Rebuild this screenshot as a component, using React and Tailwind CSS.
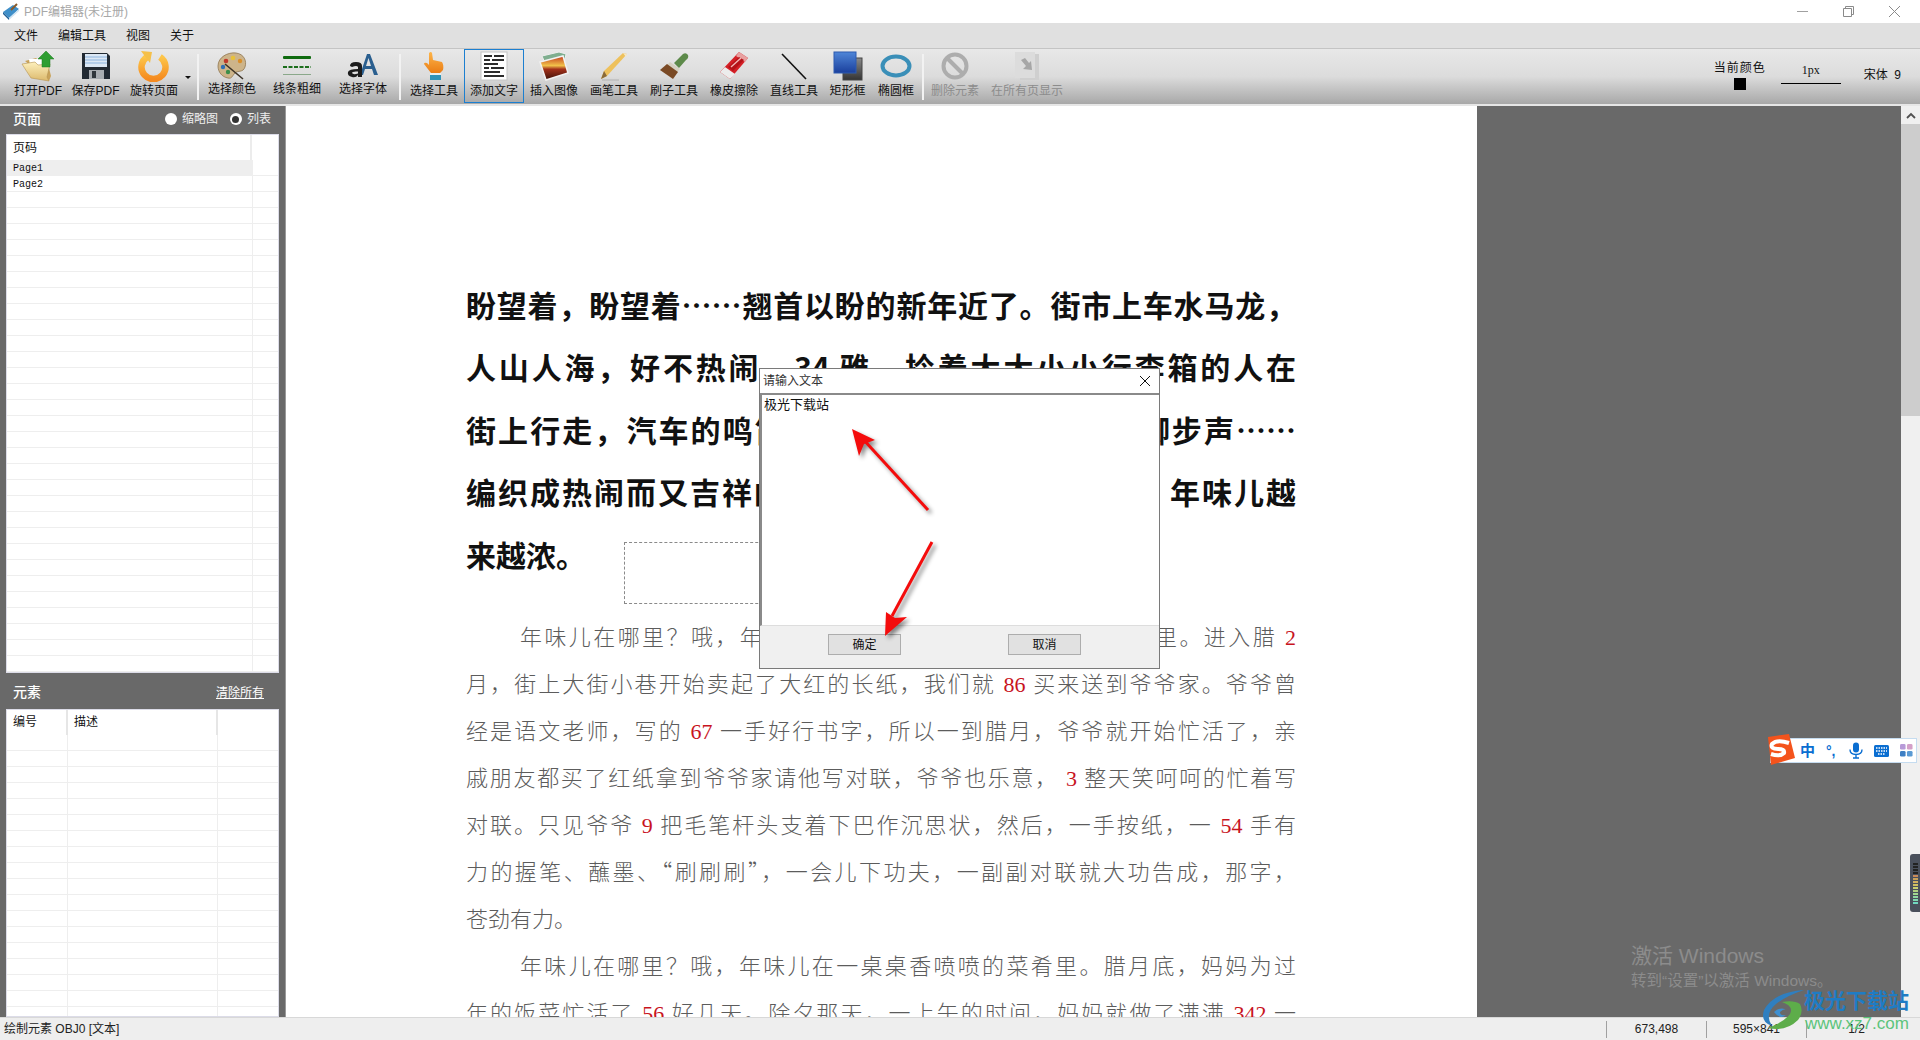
import React from 'react';

const AppIcon = () => (
  <svg width="18" height="18" viewBox="0 0 18 18">
    <path d="M1 9 L11 2 L17 6 L7 15 Z" fill="#3f8fc9" />
    <path d="M1 9 L7 15 L7 17 L1 11 Z" fill="#1f5f96" />
    <path d="M7 15 L17 6 L17 8 L7 17 Z" fill="#cfe3f2" />
    <path d="M9 7 L15 1" stroke="#8a5a2a" strokeWidth="2" />
  </svg>
);

const FolderIcon = () => (
  <svg width="34" height="32" viewBox="0 0 34 32">
    <defs>
      <linearGradient id="folderA" x1="0" y1="0" x2="0" y2="1">
        <stop offset="0" stopColor="#fdf0bd" />
        <stop offset="1" stopColor="#dcb96c" />
      </linearGradient>
    </defs>
    <path d="M4 11 L15 8 L18 11 L26 10 L30 26 L28 31 Z" fill="#c9a35a" />
    <path d="M8 9 H24 V22 H10 Z" fill="#fff" />
    <path d="M1 14 L14 12 L17 15 L29 14 L26 27 L28 31 L10 28 Q6 22 1 14 Z" fill="url(#folderA)" stroke="#b5924f" strokeWidth="0.6" />
    <path d="M17 9 L25 1 L33 9 H29 V17 H21 V9 Z" fill="#2f9e32" stroke="#1f7a22" strokeWidth="0.5" />
  </svg>
);

const SaveIcon = () => (
  <svg width="30" height="28" viewBox="0 0 30 28">
    <path d="M1 1 H26 L29 4 V27 H1 Z" fill="#222a33" />
    <rect x="4" y="2" width="22" height="13" fill="#dce8f5" />
    <path d="M4 5 H26 M4 8 H26 M4 11 H26" stroke="#8db4de" strokeWidth="1" />
    <rect x="8" y="18" width="15" height="9" fill="#a9adb2" />
    <rect x="11" y="19" width="4" height="7" fill="#30363c" />
  </svg>
);

const RotateIcon = () => (
  <svg width="32" height="32" viewBox="0 0 32 32">
    <defs>
      <linearGradient id="rotA" x1="0" y1="0" x2="0" y2="1">
        <stop offset="0" stopColor="#fdc64a" />
        <stop offset="1" stopColor="#f58a1f" />
      </linearGradient>
    </defs>
    <path d="M22 7 A12 12 0 1 1 9 7" fill="none" stroke="url(#rotA)" strokeWidth="6.5" />
    <path d="M3 1 L14 2 L12 13 Z" fill="#f5c04a" />
  </svg>
);

const PaletteIcon = () => (
  <svg width="32" height="30" viewBox="0 0 32 30">
    <path d="M2 15 C2 6 12 1 20 2 C28 3 31 10 29 16 C27 22 22 19 19 22 C16 25 16 28 12 27 C6 26 2 21 2 15 Z" fill="#cdb48a" stroke="#8f7650" strokeWidth="0.8" />
    <circle cx="10" cy="10" r="2.3" fill="#c0392b" />
    <circle cx="17" cy="7" r="2.3" fill="#e8c13a" />
    <circle cx="24" cy="10" r="2.2" fill="#d98f2b" />
    <circle cx="7" cy="16" r="2.2" fill="#2f6fb5" />
    <circle cx="12" cy="21" r="2.2" fill="#3b8f4a" />
    <path d="M9 13 L27 28" stroke="#3d3328" strokeWidth="1.6" />
  </svg>
);

const LinesIcon = () => (
  <svg width="30" height="22" viewBox="0 0 30 22">
    <rect x="1" y="1" width="28" height="3" rx="1" fill="#0f6b0f" />
    <path d="M1 12 H29" stroke="#1c6e1c" strokeWidth="2" strokeDasharray="4 1.5" />
    <rect x="1" y="19" width="28" height="1" fill="#8aa88a" />
  </svg>
);

const FontIcon = () => (
  <svg width="32" height="28" viewBox="0 0 32 28">
    <path d="M13 23 L20 2 H23 L31 23 H27 L25 17 H18 L16 23 Z M19 14 H24 L21.5 6 Z" fill="#2a5f8f" fillRule="evenodd" />
    <path d="M3 14 Q3 10 9 10 Q15 10 15 14 V25 H11 V23 Q9 26 5 25 Q0 24 1 20 Q2 17 11 17 V15 Q10 13 5 15 Z M11 19.5 Q5 19 5 21 Q6 23 11 21.5 Z" fill="#1c1c1c" fillRule="evenodd" />
  </svg>
);

const HandIcon = () => (
  <svg width="22" height="30" viewBox="0 0 22 30">
    <defs>
      <linearGradient id="handA" x1="0" y1="0" x2="0" y2="1">
        <stop offset="0" stopColor="#fdb54a" />
        <stop offset="1" stopColor="#ea7d14" />
      </linearGradient>
    </defs>
    <path d="M6 2 Q8 0 9 2 L10 9 L19 11 Q21 14 20 19 L17 22 H8 L1 13 Q1 11 4 12 L6 14 Z" fill="url(#handA)" />
    <rect x="7" y="22" width="11" height="7" fill="#2f93b8" />
    <rect x="7" y="22" width="11" height="2" fill="#e8f0f2" />
  </svg>
);

const DocIcon = () => (
  <svg width="28" height="30" viewBox="0 0 28 30">
    <rect x="1" y="1" width="26" height="28" fill="#fdfdfd" stroke="#c4c4c4" />
    <path d="M4 5 H12 M14 5 H24 M4 9 H10 M12 9 H24 M4 13 H18 M4 17 H9 M11 17 H24 M4 21 H20 M4 25 H24" stroke="#2a2a2a" strokeWidth="1.8" />
  </svg>
);

const ImageIcon = () => (
  <svg width="30" height="30" viewBox="0 0 30 30">
    <defs>
      <linearGradient id="imgA" x1="0" y1="0" x2="0" y2="1">
        <stop offset="0" stopColor="#c23a1c" />
        <stop offset="0.4" stopColor="#f2c24a" />
        <stop offset="0.55" stopColor="#a3301a" />
        <stop offset="1" stopColor="#3d1208" />
      </linearGradient>
    </defs>
    <path d="M3 5 L20 1 L27 3 L26 8 L6 12 Z" fill="#7fae8f" stroke="#eee" />
    <path d="M1 11 L24 5 L29 22 L7 29 Z" fill="url(#imgA)" stroke="#f2f2f2" strokeWidth="1.5" />
  </svg>
);

const PencilIcon = () => (
  <svg width="30" height="30" viewBox="0 0 30 30">
    <path d="M2 28 L5 20 L24 2 L28 3 L8 25 Z" fill="#eec15c" />
    <path d="M2 28 L5 20 L8 25 Z" fill="#8a6a3a" />
    <path d="M24 2 L28 3 L27 6 Z" fill="#f5e7c4" />
    <path d="M3 29 H20" stroke="#8c8c8c" strokeWidth="0.8" opacity="0.6" />
  </svg>
);

const BrushIcon = () => (
  <svg width="30" height="28" viewBox="0 0 30 28">
    <path d="M15 11 L24 2 Q27 0 29 3 Q30 6 27 8 L20 16 Z" fill="#5d8a4a" />
    <path d="M11 10 L21 17 L18 20 L8 13 Z" fill="#d5d0c0" />
    <path d="M8 12 L19 20 L14 27 L1 18 Z" fill="#7a4a25" />
  </svg>
);

const EraserIcon = () => (
  <svg width="30" height="28" viewBox="0 0 30 28">
    <path d="M1 20 L20 0 L29 6 L11 27 Z" fill="#d41f26" />
    <path d="M1 20 L6 15 L16 22 L11 27 Z" fill="#ececec" />
    <path d="M20 0 L29 6 L26 10 L17 4 Z" fill="#e8a0a0" />
    <path d="M9 15 L20 5 L25 8 L14 19 Z" fill="#b51218" />
    <path d="M12 15 L22 6" stroke="#f4b6b6" strokeWidth="1.4" />
  </svg>
);

const LineIcon = () => (
  <svg width="26" height="27" viewBox="0 0 26 27">
    <path d="M1 1 L25 26" stroke="#111" strokeWidth="1.6" />
  </svg>
);

const RectIcon = () => (
  <svg width="30" height="30" viewBox="0 0 30 30">
    <defs>
      <linearGradient id="rectA" x1="0" y1="0" x2="0" y2="1">
        <stop offset="0" stopColor="#4f86d8" />
        <stop offset="1" stopColor="#1a3f9c" />
      </linearGradient>
      <linearGradient id="rectB" x1="0" y1="0" x2="0" y2="1">
        <stop offset="0" stopColor="#8a8a8a" />
        <stop offset="1" stopColor="#333" />
      </linearGradient>
    </defs>
    <rect x="10" y="7" width="19" height="22" fill="url(#rectB)" stroke="#444" />
    <rect x="1" y="1" width="22" height="21" fill="url(#rectA)" stroke="#2d5bb0" />
  </svg>
);

const EllipseIcon = () => (
  <svg width="32" height="24" viewBox="0 0 32 24">
    <ellipse cx="16" cy="12" rx="13.5" ry="9.5" fill="none" stroke="#3a8fb8" strokeWidth="4" />
  </svg>
);

const NoIcon = () => (
  <svg width="28" height="28" viewBox="0 0 28 28">
    <circle cx="14" cy="14" r="11.5" fill="none" stroke="#adadad" strokeWidth="4" />
    <path d="M6 6 L22 22" stroke="#adadad" strokeWidth="4" />
  </svg>
);

const GhostPageIcon = () => (
  <svg width="26" height="30" viewBox="0 0 26 30">
    <rect x="6" y="3" width="19" height="26" fill="#cfcfcf" />
    <rect x="1" y="1" width="20" height="26" fill="#dcdcdc" />
    <path d="M7 9 L11 7 L15 12 L17 10 L18 19 L9 18 L12 15 Z" fill="#a6a6a6" />
  </svg>
);

const toolsLeft = [
  { label: '打开PDF', icon: <FolderIcon />, w: 'w-[56px]' },
  { label: '保存PDF', icon: <SaveIcon />, w: 'w-[59px]' },
  { label: '旋转页面', icon: <RotateIcon />, w: 'w-[58px]' },
];

const toolsStyle = [
  { label: '选择颜色', icon: <PaletteIcon />, w: 'w-[64px]' },
  { label: '线条粗细', icon: <LinesIcon />, w: 'w-[66px]' },
  { label: '选择字体', icon: <FontIcon />, w: 'w-[66px]' },
];

const toolsDraw = [
  { label: '选择工具', icon: <HandIcon />, w: 'w-[60px]' },
  { label: '添加文字', icon: <DocIcon />, w: 'w-[60px]', active: true },
  { label: '插入图像', icon: <ImageIcon />, w: 'w-[60px]' },
  { label: '画笔工具', icon: <PencilIcon />, w: 'w-[60px]' },
  { label: '刷子工具', icon: <BrushIcon />, w: 'w-[60px]' },
  { label: '橡皮擦除', icon: <EraserIcon />, w: 'w-[60px]' },
  { label: '直线工具', icon: <LineIcon />, w: 'w-[60px]' },
  { label: '矩形框', icon: <RectIcon />, w: 'w-[47px]' },
  { label: '椭圆框', icon: <EllipseIcon />, w: 'w-[50px]' },
];

const toolsOff = [
  { label: '删除元素', icon: <NoIcon />, w: 'w-[60px]', off: true },
  { label: '在所有页显示', icon: <GhostPageIcon />, w: 'w-[84px]', off: true },
];

const ToolButton = ({ label, icon, w, active, off, short }) => (
  <div className={`${w} h-[54px] flex flex-col items-center shrink-0 ${active ? 'border border-[#1c7fd0]' : 'border border-transparent'}`}>
    <div className="h-[32px] flex items-center justify-center">{icon}</div>
    <span className={`text-[12px] leading-[14px] whitespace-nowrap ${short ? 'mt-[0px]' : 'mt-[2px]'} ${off ? 'text-[#8c8c8c]' : 'text-[#111]'}`}>
      {label}
    </span>
  </div>
);

const Sep = ({ className }) => <div className={`w-[2px] h-[46px] self-center bg-[#f2f2f2] shrink-0 ${className}`} />;

const Radio = ({ checked }) => (
  <span className="w-[12px] h-[12px] rounded-full bg-white flex items-center justify-center shrink-0">
    {checked && <span className="w-[7px] h-[7px] rounded-full bg-[#333]" />}
  </span>
);

const pageRows = ['Page1', 'Page2', ...Array(30).fill('')];
const elementRows = Array(18).fill(0);

const headLines = [
  '盼望着，盼望着……翘首以盼的新年近了。街市上车水马龙，',
  '人山人海，好不热闹。34 雅，拎着大大小小行李箱的人在',
  '街上行走，汽车的鸣笛声、人们说笑声、匆匆的脚步声……',
  '编织成热闹而又吉祥的新春交响曲。大街小巷里　年味儿越',
];

const Num = ({ children }) => <span className="text-[#c8141e] leading-none font-['Liberation_Serif',serif]"> {children} </span>;

const Line = ({ children, indent }) => (
  <div className={`[text-align-last:justify] ${indent ? 'pl-[54px]' : ''}`}>{children}</div>
);

const App = () => {
  return (
    <div className="relative w-full h-[1040px] overflow-hidden flex flex-col bg-white font-['Liberation_Sans','Noto_Sans_CJK_SC',sans-serif]">
      {/* title bar */}
      <div className="h-[23px] flex items-center shrink-0 bg-white">
        <div className="pl-[2px] pr-[4px]"><AppIcon /></div>
        <span className="text-[12px] text-[#a8a8a8]">PDF编辑器(未注册)</span>
        <div className="ml-auto flex items-center text-[#8a8a8a]">
          <svg width="11" height="11" viewBox="0 0 11 11" className="mr-[35px]"><path d="M0 5.5 H11" stroke="#a0a0a0" /></svg>
          <svg width="11" height="11" viewBox="0 0 11 11" className="mr-[35px]"><path d="M0.5 2.5 H8.5 V10.5 H0.5 Z M2.5 2.5 V0.5 H10.5 V8.5 H8.5" fill="none" stroke="#8a8a8a" /></svg>
          <svg width="11" height="11" viewBox="0 0 11 11" className="mr-[20px]"><path d="M0 0 L11 11 M11 0 L0 11" stroke="#8a8a8a" /></svg>
        </div>
      </div>

      {/* menu */}
      <div className="h-[25px] flex items-center gap-[20px] pl-[14px] bg-[#e0e0e0] text-[12px] text-[#111] shrink-0">
        <span>文件</span>
        <span>编辑工具</span>
        <span>视图</span>
        <span>关于</span>
      </div>

      {/* toolbar */}
      <div className="h-[56px] flex items-start pl-[10px] shrink-0 border-t border-[#c4c4c4] bg-linear-to-b from-[#e8e8e8] via-[#dcdcdc] to-[#a8a8a8]">
        {toolsLeft.map((t) => <ToolButton key={t.label} {...t} />)}
        <svg width="10" height="6" viewBox="0 0 10 6" className="mt-[26px] mr-[1px] shrink-0"><path d="M2 1 H8 L5 4 Z" fill="#111" /></svg>
        <Sep className="ml-[3px] mr-[1px]" />
        {toolsStyle.map((t) => <ToolButton key={t.label} short {...t} />)}
        <Sep className="ml-[3px] mr-[3px]" />
        {toolsDraw.map((t) => <ToolButton key={t.label} {...t} />)}
        <Sep className="mx-[1px]" />
        {toolsOff.map((t) => <ToolButton key={t.label} {...t} />)}
        <div className="ml-auto flex items-start text-[12px] text-[#111] self-stretch">
          <div className="flex flex-col items-center mt-[12px] w-[52px]">
            <span className="leading-[15px] tracking-[1px] whitespace-nowrap">当前颜色</span>
            <span className="w-[12px] h-[12px] mt-[2px] bg-black" />
          </div>
          <div className="ml-[15px] mt-[13px] w-[60px] h-[22px] border-b border-black text-center text-[12px] font-['Liberation_Serif',serif] leading-[16px]">1px</div>
          <div className="ml-[23px] mr-[19px] mt-[18px] leading-[16px] whitespace-pre">宋体  9</div>
        </div>
      </div>

      {/* main */}
      <div className="flex-1 min-h-0 flex bg-[#696969] border-t-2 border-[#e6e6e6]">
        {/* left panel */}
        <div className="w-[286px] shrink-0 flex flex-col pl-[6px] pr-[6px] border-r border-[#9a9a9a]">
          <div className="h-[28px] flex items-center text-white shrink-0 pb-[2px]">
            <span className="pl-[7px] text-[14px] font-medium">页面</span>
            <div className="ml-auto flex items-center text-[12px] text-[#eeeeee] pr-[8px]">
              <Radio />
              <span className="ml-[5px] mr-[12px]">缩略图</span>
              <Radio checked />
              <span className="ml-[5px]">列表</span>
            </div>
          </div>
          <div className="h-[539px] shrink-0 bg-white border border-[#dcdce8] overflow-hidden">
            <div className="h-[25px] flex text-[12px] text-[#111]">
              <div className="w-[245px] pl-[6px] pt-[4px] border-r-2 border-[#ececec]">页码</div>
            </div>
            {pageRows.map((p, i) => (
              <div key={i} className="h-[16px] flex border-b border-[#eeeeee]">
                <div className={`w-[246px] pl-[6px] text-[10px] leading-[17px] text-[#111] font-['Liberation_Mono',monospace] border-r border-[#eeeeee] ${i === 0 ? 'bg-[#eeeeee]' : ''}`}>{p}</div>
              </div>
            ))}
          </div>
          <div className="h-[35px] mt-[1px] pt-[2px] flex items-center text-white shrink-0">
            <span className="pl-[7px] text-[14px] font-medium">元素</span>
            <span className="ml-auto pr-[15px] text-[12px] underline">清除所有</span>
          </div>
          <div className="flex-1 min-h-0 bg-white border border-[#dcdce8] overflow-hidden">
            <div className="h-[25px] flex text-[12px] text-[#111]">
              <div className="w-[61px] pl-[6px] pt-[3px] border-r-2 border-[#e6e6e6]">编号</div>
              <div className="w-[150px] pl-[6px] pt-[3px] border-r-2 border-[#e6e6e6]">描述</div>
            </div>
            {elementRows.map((_, i) => (
              <div key={i} className="h-[16px] flex border-b border-[#eeeeee]">
                <div className="w-[61px] border-r border-[#eeeeee]" />
                <div className="w-[150px] border-r border-[#eeeeee]" />
              </div>
            ))}
          </div>
        </div>

        {/* document view */}
        <div className="flex-1 min-w-0 flex justify-between overflow-hidden">
          <div className="relative w-[1191px] h-full overflow-hidden bg-white pl-[180px] pr-[181px] pt-[167px] font-['Noto_Sans_CJK_SC',sans-serif]">
            <div className="text-[30px] leading-[62.4px] font-bold text-[#111]">
              {headLines.map((l) => <div key={l} className="[text-align-last:justify]">{l}</div>)}
              <div>来越浓。</div>
            </div>
            <div className="mt-[27px] text-[22px] leading-[47px] text-[#5c5c5c] font-light">
              <Line indent>年味儿在哪里？哦，年味儿在一副副写满祝福的红红的对联里。进入腊<Num>2</Num></Line>
              <Line>月，街上大街小巷开始卖起了大红的长纸，我们就<Num>86</Num>买来送到爷爷家。爷爷曾</Line>
              <Line>经是语文老师，写的<Num>67</Num>一手好行书字，所以一到腊月，爷爷就开始忙活了，亲</Line>
              <Line>戚朋友都买了红纸拿到爷爷家请他写对联，爷爷也乐意，<Num>3</Num>整天笑呵呵的忙着写</Line>
              <Line>对联。只见爷爷<Num>9</Num>把毛笔杆头支着下巴作沉思状，然后，一手按纸，一<Num>54</Num>手有</Line>
              <Line>力的握笔、蘸墨、“刷刷刷”，一会儿下功夫，一副副对联就大功告成，那字，</Line>
              <div>苍劲有力。</div>
              <Line indent>年味儿在哪里？哦，年味儿在一桌桌香喷喷的菜肴里。腊月底，妈妈为过</Line>
              <Line>年的饭菜忙活了<Num>56</Num>好几天。除夕那天，一上午的时间，妈妈就做了满满<Num>342</Num>一</Line>
            </div>
            <div className="absolute left-[338px] top-[436px] w-[220px] h-[62px] border border-dashed border-[#8a8a8a]" />
          </div>

          {/* scrollbar */}
          <div className="w-[19px] h-full shrink-0 bg-[#f0f0f0] flex flex-col items-center">
            <svg width="12" height="14" viewBox="0 0 12 14" className="mt-[3px]"><path d="M2 9 L6 5 L10 9" fill="none" stroke="#505050" strokeWidth="1.8" /></svg>
            <div className="w-full h-[292px] mt-[1px] bg-[#cdcdcd]" />
          </div>
        </div>
      </div>

      {/* status bar */}
      <div className="h-[23px] flex items-center shrink-0 bg-[#eeeeee] border-t border-[#d8d8d8] text-[12px] text-[#222]">
        <span className="pl-[4px]">绘制元素 OBJ0 [文本]</span>
        <div className="ml-auto flex">
          <div className="w-[100px] h-[17px] border-l border-[#a0a0a0] text-center leading-[17px]">673,498</div>
          <div className="w-[100px] h-[17px] border-l border-[#a0a0a0] text-center leading-[17px]">595×841</div>
          <div className="w-[114px] h-[17px] border-l border-[#a0a0a0] text-center leading-[17px] pr-[14px]">1/2</div>
        </div>
      </div>

      {/* text dialog */}
      <div className="absolute left-[759px] top-[368px] w-[401px] h-[301px] flex flex-col bg-[#f0f0f0] border border-[#7a7a7a]">
        <div className="h-[26px] flex items-center justify-between bg-white border-b-2 border-[#8a8a8a] shrink-0">
          <span className="pl-[3px] text-[12px] text-[#333]">请输入文本</span>
          <svg width="10" height="10" viewBox="0 0 10 10" className="mr-[9px]"><path d="M0 0 L10 10 M10 0 L0 10" stroke="#111" /></svg>
        </div>
        <div className="h-[231px] shrink-0 bg-white border-l-2 border-[#8a8a8a] border-b border-b-[#dddddd] pl-[2px] pt-[2px] text-[13px] leading-[16px] text-[#111]">
          极光下载站
        </div>
        <div className="flex justify-between pl-[68px] pr-[78px] pt-[8px]">
          <button className="w-[73px] h-[21px] bg-[#e1e1e1] border border-[#adadad] text-[12px] leading-[16px] text-[#111]">确定</button>
          <button className="w-[73px] h-[21px] bg-[#e1e1e1] border border-[#adadad] text-[12px] leading-[16px] text-[#111]">取消</button>
        </div>
      </div>

      {/* annotation arrows */}
      <svg width="120" height="240" viewBox="0 0 120 240" className="absolute left-[840px] top-[420px] drop-shadow-[3px_3px_2px_rgba(0,0,0,0.45)]">
        <path d="M88 90 L22 18" stroke="#f40c0c" strokeWidth="3" />
        <path d="M12 9 L35 20 L24 24 L19 36 Z" fill="#f40c0c" />
        <path d="M92 122 L52 196" stroke="#f40c0c" strokeWidth="3" />
        <path d="M45 216 L46 192 L55 198 L67 197 Z" fill="#f40c0c" />
      </svg>

      {/* sogou ime bar */}
      <div className="absolute left-[1770px] top-[738px] w-[147px] h-[25px] bg-white border border-[#c5dcf0] flex items-center pl-[29px] gap-[11px] text-[#0a6ed1]">
        <span className="w-[15px] text-[15px] font-bold leading-none">中</span>
        <span className="w-[12px] text-[14px] font-bold leading-none">°,</span>
        <svg width="14" height="17" viewBox="0 0 14 16"><rect x="4" y="0" width="6" height="10" rx="3" fill="#0a6ed1" /><path d="M1 7 Q1 12 7 12 Q13 12 13 7 M7 12 V15 M4 15.5 H10" fill="none" stroke="#0a6ed1" strokeWidth="1.4" /></svg>
        <svg width="15" height="12" viewBox="0 0 15 12"><rect x="0" y="0" width="15" height="12" rx="1.5" fill="#0a6ed1" /><path d="M2 3 H13 M2 6 H13 M4 9 H11" stroke="#fff" strokeDasharray="1.5 1" strokeWidth="1.3" /></svg>
        <svg width="13" height="13" viewBox="0 0 14 14"><rect width="6" height="6" rx="1.5" fill="#b79ad8" /><rect x="7.5" width="6" height="6" rx="1.5" fill="#d4a0c8" /><rect y="7.5" width="6" height="6" rx="1.5" fill="#3d7fc4" /><rect x="7.5" y="7.5" width="6" height="6" rx="1.5" fill="#5a9ad4" /></svg>
      </div>
      <svg width="33" height="31" viewBox="0 0 33 31" className="absolute left-[1763px] top-[734px]">
        <path d="M5 3 L26 0 L32 24 L8 31 Z" fill="#f4531c" />
        <path d="M26 9 Q14 5 9 10 Q7 15 15 15 Q22 15 21 19 Q17 23 8 20" fill="none" stroke="#fff" strokeWidth="4" />
      </svg>

      {/* side widget */}
      <div className="absolute left-[1910px] top-[854px] w-[10px] h-[58px] rounded-l-[3px] bg-[#4a505c] flex flex-col items-center justify-center gap-[1px]">
        {['#222', '#222', '#222', '#222', '#c98a5a', '#c9a05a', '#d0b060', '#d0c060', '#c8d070', '#b0d080', '#a0d890', '#90d8a0', '#80d8b0', '#70d8c0'].map((c, i) => (
          <span key={i} className="w-[5px] h-[2px]" style={{ backgroundColor: c }} />
        ))}
      </div>

      {/* activation watermark */}
      <div className="absolute left-[1631px] top-[943px] text-[#8c8c8c]">
        <div className="text-[21px] leading-[26px]">激活 Windows</div>
        <div className="text-[15.5px] leading-[20px] mt-[2px]">转到“设置”以激活 Windows。</div>
      </div>

      {/* site watermark */}
      <svg width="46" height="48" viewBox="0 0 46 48" className="absolute left-[1760px] top-[988px]">
        <path d="M44 2 Q14 4 4 22 Q0 34 12 38 Q4 26 16 16 Q26 8 44 2 Z" fill="#2f7fc0" />
        <path d="M8 40 Q26 44 38 32 Q44 24 40 16 Q34 12 22 14 Q34 18 30 26 Q24 34 8 40 Z" fill="#5dad4a" />
        <path d="M14 24 Q20 18 28 22 Q24 20 20 24 Q20 28 26 27 Q20 32 14 24 Z" fill="#3f8fd0" />
      </svg>
      <div className="absolute left-[1804px] top-[988px] text-[21px] leading-[26px] font-bold text-[#1f7cc4] whitespace-nowrap">极光下载站</div>
      <div className="absolute left-[1805px] top-[1014px] text-[17px] leading-[20px] font-medium text-[#5cc47c] whitespace-nowrap">www.xz7.com</div>
    </div>
  );
};

export default App;
